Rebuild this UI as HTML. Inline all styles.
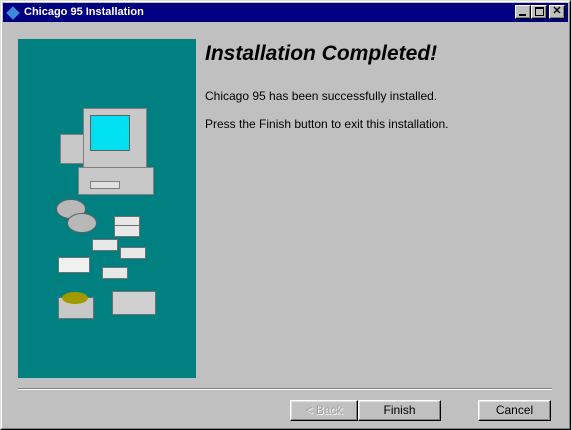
<!DOCTYPE html>
<html><head><style>
*{margin:0;padding:0;box-sizing:border-box}
body{width:571px;height:430px;background:#c0c0c0;position:relative;overflow:hidden;font-family:"Liberation Sans",sans-serif;font-size:11px;color:#000}
.win{position:absolute;left:0;top:0;width:571px;height:430px;border:1px solid;border-color:#dfdfdf #000 #000 #dfdfdf}
.win2{position:absolute;left:1px;top:1px;right:1px;bottom:1px;border:1px solid;border-color:#fff #808080 #808080 #fff}
.title{position:absolute;left:3px;top:3px;width:565px;height:19px;background:#000080;color:#fff;font-weight:bold;font-size:11px;line-height:19px;padding-left:21px}
.tb{position:absolute;top:5px;width:16px;height:14px;background:#c0c0c0;border:1px solid;border-color:#fff #000 #000 #fff;box-shadow:inset -1px -1px #808080}
.panel{position:absolute;left:18px;top:39px;width:178px;height:339px;background:#008080}
.btn{position:absolute;top:400px;height:21px;background:#c0c0c0;border:1px solid;border-color:#fff #000 #000 #fff;box-shadow:inset -1px -1px #808080,inset 1px 1px #dfdfdf;text-align:center;line-height:19px;font-size:12px}
.g{position:absolute}
</style></head><body>
<div class="win"></div><div class="win2"></div>
<div class="title">Chicago 95 Installation</div>
<div class="g" style="left:7px;top:7px;width:12px;height:12px;background:#3a8be0;transform:rotate(45deg) scale(.8)"></div>
<div class="tb" style="left:515px"><div class="g" style="left:3px;top:8px;width:7px;height:2px;background:#000"></div></div>
<div class="tb" style="left:531px"><div class="g" style="left:3px;top:1px;width:9px;height:9px;border:1px solid #000;border-top-width:2px"></div></div>
<div class="tb" style="left:549px;font-size:11px;line-height:11px;text-align:center;font-weight:bold;color:#000">✕</div>
<div class="panel">
 <div class="g" style="left:65px;top:69px;width:64px;height:60px;background:#c8c8c8;border:1px solid #808080"></div>
 <div class="g" style="left:72px;top:76px;width:40px;height:36px;background:#00e0f0;border:1px solid #606060"></div>
 <div class="g" style="left:42px;top:95px;width:24px;height:30px;background:#c8c8c8;border:1px solid #808080"></div>
 <div class="g" style="left:60px;top:128px;width:76px;height:28px;background:#c8c8c8;border:1px solid #808080"></div>
 <div class="g" style="left:72px;top:142px;width:30px;height:8px;background:#e0e0e0;border:1px solid #808080"></div>
 <div class="g" style="left:38px;top:160px;width:30px;height:20px;border-radius:50%;background:#b8b8b8;border:1px solid #606060"></div>
 <div class="g" style="left:49px;top:174px;width:30px;height:20px;border-radius:50%;background:#b8b8b8;border:1px solid #606060"></div>
 <div class="g" style="left:96px;top:177px;width:26px;height:12px;background:#e8e8e8;border:1px solid #707070"></div>
 <div class="g" style="left:96px;top:186px;width:26px;height:12px;background:#e8e8e8;border:1px solid #707070"></div>
 <div class="g" style="left:74px;top:200px;width:26px;height:12px;background:#e8e8e8;border:1px solid #707070"></div>
 <div class="g" style="left:102px;top:208px;width:26px;height:12px;background:#e8e8e8;border:1px solid #707070"></div>
 <div class="g" style="left:84px;top:228px;width:26px;height:12px;background:#e8e8e8;border:1px solid #707070"></div>
 <div class="g" style="left:40px;top:218px;width:32px;height:16px;background:#f0f0f0;border:1px solid #707070"></div>
 <div class="g" style="left:40px;top:258px;width:36px;height:22px;background:#c8c8c8;border:1px solid #707070"></div>
 <div class="g" style="left:44px;top:253px;width:26px;height:12px;border-radius:50%;background:#a09a00"></div>
 <div class="g" style="left:94px;top:252px;width:44px;height:24px;background:#d0d0d0;border:1px solid #707070"></div>
</div>
<div class="g" style="left:205px;top:42px;font-size:21px;font-weight:bold;font-style:italic">Installation Completed!</div>
<div class="g" style="left:205px;top:89px;font-size:12px">Chicago 95 has been successfully installed.</div>
<div class="g" style="left:205px;top:117px;font-size:12px">Press the Finish button to exit this installation.</div>
<div class="g" style="left:18px;top:388px;width:534px;height:2px;border-top:1px solid #808080;border-bottom:1px solid #fff"></div>
<div class="btn" style="left:290px;width:68px;color:#a0a0a0;text-shadow:1px 1px #fff">&lt; Back</div>
<div class="btn" style="left:358px;width:83px">Finish</div>
<div class="btn" style="left:478px;width:73px">Cancel</div>
</body></html>
